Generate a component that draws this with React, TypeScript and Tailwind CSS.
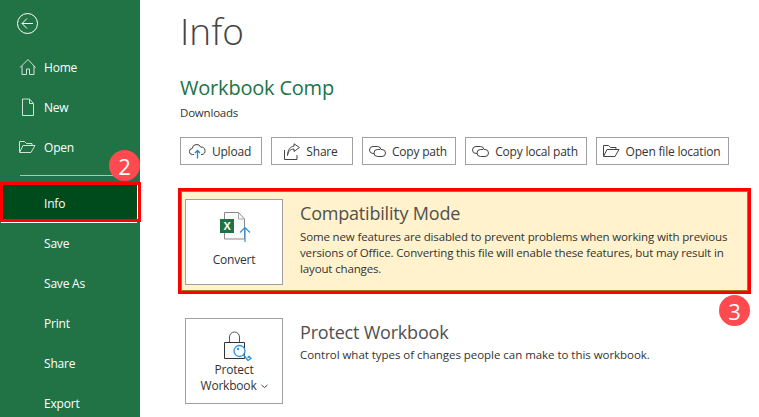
import React from "react";

const font = { fontFamily: '"Open Sans", "Noto Sans", sans-serif' };

const Home = () => (
  <svg width="18" height="18" viewBox="0 0 18 18" fill="none" stroke="#d3e3d9" strokeWidth="1">
    <path d="M1 9.5 9 1.5l7.5 8M3 8v8.5h4.5V11h3v5.5H15V8" />
  </svg>
);
const NewIcon = () => (
  <svg width="18" height="18" viewBox="0 0 18 18" fill="none" stroke="#d3e3d9" strokeWidth="1">
    <path d="M3.5 1h7l4 4.5v12h-11zM10.500 1v4.500h4" />
  </svg>
);
const OpenIcon = ({ c = "#d3e3d9" }: { c?: string }) => (
  <svg width="17" height="14" viewBox="0 0 17 14" fill="none" stroke={c} strokeWidth="1">
    <path d="M.5 12V1.500h5l2 2H13v2M.5 12.500H12l4-7H4z" />
  </svg>
);
const Chain = () => (
  <svg width="17" height="13" viewBox="0 0 17 13" fill="none" stroke="#444" strokeWidth="1">
    <path d="M5 8.500H4a3.500 3.500 0 0 1 0-7h4.500A3.500 3.500 0 0 1 12 4.500" />
    <path d="M12 4.500h1a3.500 3.500 0 0 1 0 7H8.500A3.500 3.500 0 0 1 5 8a3.500 3.500 0 0 1 3.500-3.500H11" />
  </svg>
);
const Upload = () => (
  <svg width="17" height="16" viewBox="0 0 17 16" fill="none" strokeWidth="1">
    <path d="M5 11.500H3.500a3 3 0 0 1-.3-6 4.500 4.500 0 0 1 8.600-1.300A3.700 3.700 0 0 1 13 11.500h-1" stroke="#444" />
    <path d="M8.500 15.500v-8M6 10l2.500-2.500L11 10" stroke="#1e88d6" strokeWidth="1.3" />
  </svg>
);
const ShareIcon = () => (
  <svg width="16" height="17" viewBox="0 0 16 17" fill="none" stroke="#444" strokeWidth="1">
    <path d="M.5 7v9.500H13V12" />
    <path d="M3.500 12.500C4 8.500 6.500 6 10 6v2.500l5.500-4L10 .8v2.400C6 3.500 3.800 7 3.500 12.500z" />
  </svg>
);
const ConvertIcon = () => (
  <svg width="32" height="30" viewBox="0 0 32 30" fill="none" className="ml-[4px] block">
    <path d="M4.500 .5h14l6 6.500v20h-20z" fill="#fafafa" stroke="#8a8a8a" />
    <path d="M18.500 .5V7h6" stroke="#a8a8a8" />
    <rect x="0" y="7" width="14" height="14" fill="#1f7244" />
    <text x="7" y="18" textAnchor="middle" fontSize="11" fontWeight="700" fill="#fff" fontFamily="Liberation Sans">X</text>
    <path d="M25 30V15.500M20 20.500l5-5 5 5" stroke="#2a94e0" strokeWidth="1.2" />
  </svg>
);
const LockIcon = () => (
  <svg width="28" height="30" viewBox="0 0 28 30" fill="none" className="ml-[8px] block">
    <path d="M5.500 12V6a5 5 0 0 1 10 0v6" stroke="#555" />
    <path d="M.5 11.500h20v16H.5z" fill="#fafafa" stroke="#333" />
    <path d="M19.500 24l4.500 5.500 3-2-2-2.200-1.500 1.200" stroke="#2a94e0" strokeWidth="1.3" />
    <circle cx="15.500" cy="20" r="5.500" fill="#fff" stroke="#2a94e0" strokeWidth="1.3" />
    <circle cx="14" cy="18" r="1.200" fill="#2a94e0" />
  </svg>
);

const NavItem = ({ icon, label }: { icon?: React.ReactNode; label: string }) => (
  <div className="flex h-10 shrink-0 items-center text-[12px] text-white">
    <div className="flex w-[44px] shrink-0 justify-center pl-[11px]">{icon}</div>
    <span className="pt-[2px]">{label}</span>
  </div>
);

const Btn = ({ w, icon, label }: { w: string; icon: React.ReactNode; label: string }) => (
  <div className={`flex h-[28px] items-center justify-center gap-[6px] border border-[#a0a0a0] pr-[2px] text-[12px] text-[#333] ${w}`}>
    {icon}
    <span className="pt-[2px]">{label}</span>
  </div>
);

export default function App() {
  return (
    <div className="relative flex h-[417px] w-[759px] overflow-hidden bg-white tracking-[-0.2px]" style={font}>
      <aside className="flex w-[140px] shrink-0 flex-col bg-[#217346]">
        <div className="flex h-[47px] shrink-0 items-start pl-[17px] pt-[13px]">
          <svg width="21" height="21" viewBox="0 0 21 21" fill="none" stroke="#fff" strokeWidth="1">
            <circle cx="10.5" cy="10.5" r="10" />
            <path d="M16 10.500H5M10 5.500l-5 5 5 5" />
          </svg>
        </div>
        <NavItem icon={<Home />} label="Home" />
        <NavItem icon={<NewIcon />} label="New" />
        <NavItem icon={<OpenIcon />} label="Open" />
        <div className="mx-[20px] mt-[8px] h-px shrink-0 bg-[#a9c9b6]" />
        <div className="z-10 mt-[6px] h-[40px] w-[141px] shrink-0 border-[3px] border-[#ff0000] bg-[#004b1c] shadow-[inset_-1px_0_0_#ffffff]">
          <div className="pl-[41px] pt-[4px] text-[12px] leading-[30px] text-white">Info</div>
        </div>
        <div className="ml-px h-px w-[136px] shrink-0 bg-white" />
        <NavItem label="Save" />
        <NavItem label="Save As" />
        <NavItem label="Print" />
        <NavItem label="Share" />
        <NavItem label="Export" />
      </aside>

      <main className="flex-1 pl-[38px]">
        <h1 className="ml-[2px] mt-[2px] h-[58px] text-[37px] font-light leading-[58px] tracking-normal text-[#444]">Info</h1>
        <div className="ml-[2px] mt-[14px] text-[20px] leading-[28px] text-[#217346]">Workbook Comp</div>
        <div className="ml-[2px] mt-[3px] text-[11.5px] leading-[16px] text-[#333]">Downloads</div>
        <div className="ml-[2px] mt-[16px] flex gap-[9px]">
          <Btn w="w-[82px]" icon={<Upload />} label="Upload" />
          <Btn w="w-[82px]" icon={<ShareIcon />} label="Share" />
          <Btn w="w-[94px]" icon={<Chain />} label="Copy path" />
          <Btn w="w-[122px]" icon={<Chain />} label="Copy local path" />
          <Btn w="w-[133px]" icon={<OpenIcon c="#444" />} label="Open file location" />
        </div>

        <section className="mt-[23px] h-[106px] w-[573px] border-[3px] border-[#ff0000]">
          <div className="flex h-full border border-[#a07a1e] bg-[#fff2cc] pl-[3px] pt-[7px]">
            <div className="flex h-[86px] w-[98px] shrink-0 flex-col items-center border border-[#a0a0a0] bg-white pt-[12px] text-[12px] text-[#333]">
              <ConvertIcon />
              <span className="mt-[9px]">Convert</span>
            </div>
            <div className="ml-[17px]">
              <div className="pt-px text-[18px] leading-[26px] text-[#505050]">Compatibility Mode</div>
              <p className="mt-[3px] w-[436px] text-[11.5px] leading-[16px] tracking-[-0.14px] text-[#333]">
                Some new features are disabled to prevent problems when working with previous versions of Office. Converting this file will enable these features, but may result in layout changes.
              </p>
            </div>
          </div>
        </section>

        <section className="ml-[7px] mt-[24px] flex">
          <div className="flex h-[86px] w-[98px] shrink-0 flex-col items-center border border-[#a0a0a0] bg-white pt-[12px] text-[12px] leading-[16px] text-[#333]">
            <LockIcon />
            <span className="mt-px">Protect</span>
            <span className="flex items-center gap-[4px]">
              Workbook
              <svg width="7" height="5" viewBox="0 0 7 5" fill="none" stroke="#444">
                <path d="M.5 1l3 2.500 3-2.500" />
              </svg>
            </span>
          </div>
          <div className="ml-[17px]">
            <div className="pt-px text-[18px] leading-[26px] text-[#505050]">Protect Workbook</div>
            <p className="mt-[2px] text-[11.5px] leading-[16px] tracking-[-0.04px] text-[#333]">
              Control what types of changes people can make to this workbook.
            </p>
          </div>
        </section>
      </main>

      <div className="absolute left-[109px] top-[150px] z-20 flex h-[31px] w-[31px] items-center justify-center rounded-full bg-[#ff4a4f] text-[22px] leading-none text-white">2</div>
      <div className="absolute left-[719px] top-[295px] z-20 flex h-[31px] w-[31px] items-center justify-center rounded-full bg-[#ff4a4f] text-[22px] leading-none text-white">3</div>
    </div>
  );
}
